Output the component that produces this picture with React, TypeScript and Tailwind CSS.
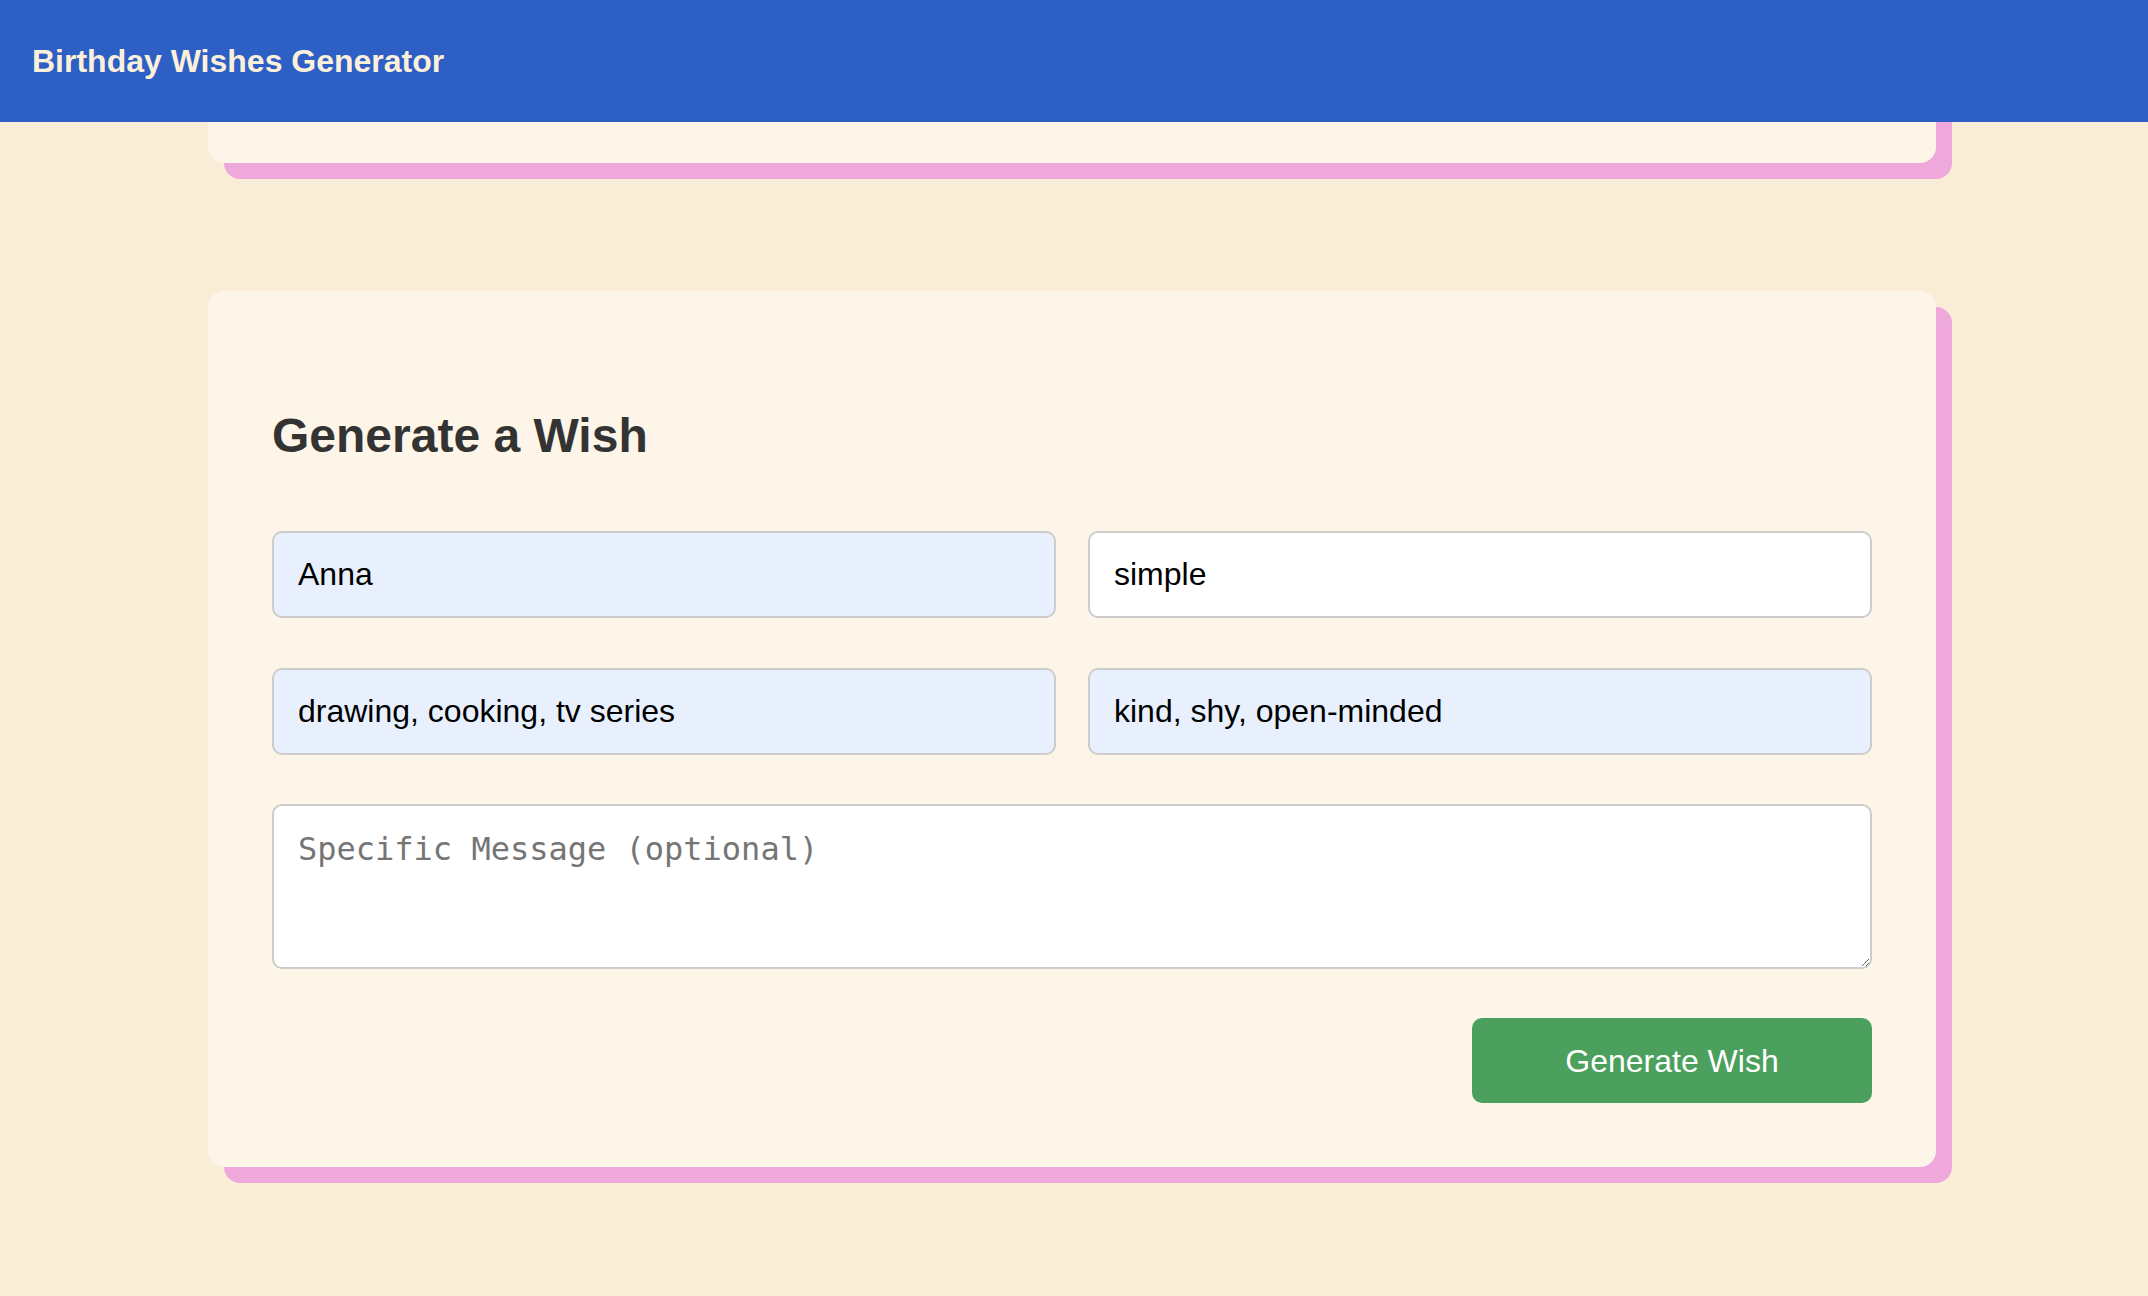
import { useState } from 'react';

const fieldBase =
  "h-[87px] w-full rounded-[10px] border-2 border-[#cccccc] px-6 text-[32px] text-black outline-none font-['Liberation_Sans',Arial,sans-serif]";

export default function App() {
  const [name, setName] = useState('Anna');
  const [style, setStyle] = useState('simple');
  const [hobbies, setHobbies] = useState('drawing, cooking, tv series');
  const [traits, setTraits] = useState('kind, shy, open-minded');
  const [message, setMessage] = useState('');

  return (
    <div className="min-h-[1296px] bg-[#f9edd8] font-['Liberation_Sans',Arial,sans-serif]">
      <header className="sticky top-0 z-10 flex h-[122px] items-center bg-[#2d5fc5] px-8">
        <h1 className="text-[32px] font-bold text-[#fcf0da]">Birthday Wishes Generator</h1>
      </header>

      <main className="flex flex-col pl-[208px] pb-[129px]">
        {/* previous card, scrolled up under the header */}
        <div className="-mt-[80px] h-[121px] w-[1728px] rounded-2xl bg-[#fdf5e8] shadow-[16px_16px_0_#eea8dc]" />

        <section className="mt-[128px] w-[1728px] rounded-2xl bg-[#fdf5e8] p-16 shadow-[16px_16px_0_#eea8dc]">
          <h2 className="mt-[53px] mb-[68px] text-[48px] leading-[55px] font-bold text-[#333333]">
            Generate a Wish
          </h2>

          <div className="grid grid-cols-2 gap-x-8 gap-y-[50px]">
            <input
              className={`${fieldBase} bg-[#e8f0fe]`}
              value={name}
              onChange={(e) => setName(e.target.value)}
            />
            <input
              className={`${fieldBase} bg-white`}
              value={style}
              onChange={(e) => setStyle(e.target.value)}
            />
            <input
              className={`${fieldBase} bg-[#e8f0fe]`}
              value={hobbies}
              onChange={(e) => setHobbies(e.target.value)}
            />
            <input
              className={`${fieldBase} bg-[#e8f0fe]`}
              value={traits}
              onChange={(e) => setTraits(e.target.value)}
            />
          </div>

          <textarea
            className="mt-[49px] block h-[165px] w-full rounded-[10px] border-2 border-[#cccccc] bg-white px-6 pt-[19px] pb-6 text-[32px] text-black outline-none font-['DejaVu_Sans_Mono',monospace] placeholder:text-[#757575]"
            placeholder="Specific Message (optional)"
            value={message}
            onChange={(e) => setMessage(e.target.value)}
          />

          <div className="mt-[49px] flex justify-end">
            <button
              type="button"
              className="h-[85px] w-[400px] rounded-[10px] bg-[#4ba05d] text-[32px] text-white"
            >
              Generate Wish
            </button>
          </div>
        </section>
      </main>
    </div>
  );
}
